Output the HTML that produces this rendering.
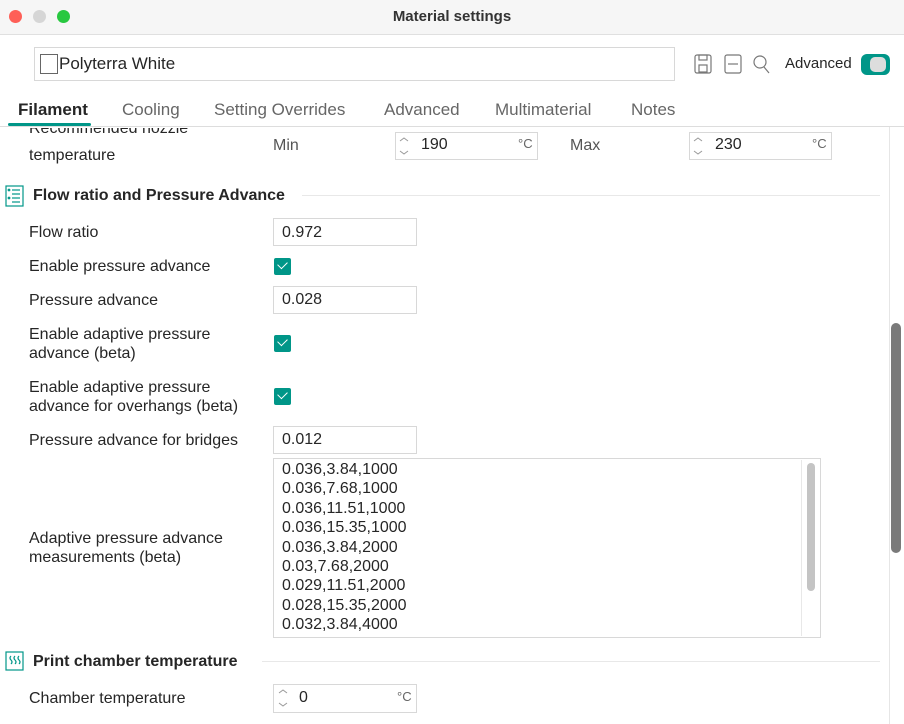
<!DOCTYPE html>
<html><head><style>
*{box-sizing:border-box;margin:0;padding:0}
body{width:904px;height:724px;background:#fff;font-family:"Liberation Sans",sans-serif;color:#262626;position:relative;overflow:hidden;font-size:16px}
.a{position:absolute;white-space:nowrap}
.box{position:absolute;border:1px solid #d8d8d8;background:#fff}
.cb{position:absolute;width:17px;height:17px;background:#009688;border-radius:2px}
.cb:after{content:"";position:absolute;left:4px;top:3px;width:8px;height:5px;border-left:1.5px solid #fff;border-bottom:1.5px solid #fff;transform:rotate(-45deg)}
.sp{position:absolute;width:16px;height:26px;border-right:1px solid #eee}
.hr{position:absolute;height:1px;background:#e8e8e8}
</style></head><body>
<div class="a" style="left:0;top:0;width:904px;height:35px;background:#f6f6f6;border-bottom:1px solid #e0e0e0"></div>
<div class="a" style="left:9px;top:10px;width:13px;height:13px;border-radius:50%;background:#fe5f57"></div>
<div class="a" style="left:33px;top:10px;width:13px;height:13px;border-radius:50%;background:#d6d6d6"></div>
<div class="a" style="left:57px;top:10px;width:13px;height:13px;border-radius:50%;background:#28c840"></div>
<div class="a" style="left:0;width:904px;text-align:center;top:8px;font-weight:bold;font-size:15px;color:#333">Material settings</div>

<div class="box" style="left:34px;top:47px;width:641px;height:34px"></div>
<div class="a" style="left:40px;top:54px;width:18px;height:20px;border:1px solid #666"></div>
<div class="a" style="left:59px;top:54px;font-size:17px">Polyterra White</div>
<svg class="a" style="left:694px;top:54px" width="80" height="22" fill="none" stroke="#777" stroke-width="1.2">
<rect x="1" y="1" width="16" height="18" rx="2"/><rect x="5" y="1" width="8" height="5"/><rect x="5" y="11" width="8" height="7"/>
<rect x="31" y="1" width="16" height="18" rx="2"/><line x1="34" y1="10" x2="44" y2="10"/>
<circle cx="66" cy="8" r="6"/><line x1="70" y1="13" x2="75" y2="19"/>
</svg>
<div class="a" style="left:785px;top:55px;font-size:15px">Advanced</div>
<div class="a" style="left:861px;top:54px;width:29px;height:21px;border-radius:6px;background:#009688"></div>
<div class="a" style="left:870px;top:57px;width:16px;height:15px;border-radius:5px;background:#ddd"></div>

<div class="a" style="left:18px;top:100px;font-size:17px;font-weight:bold">Filament</div>
<div class="a" style="left:122px;top:100px;font-size:17px;color:#666">Cooling</div>
<div class="a" style="left:214px;top:100px;font-size:17px;color:#666">Setting Overrides</div>
<div class="a" style="left:384px;top:100px;font-size:17px;color:#666">Advanced</div>
<div class="a" style="left:495px;top:100px;font-size:17px;color:#666">Multimaterial</div>
<div class="a" style="left:631px;top:100px;font-size:17px;color:#666">Notes</div>
<div class="a" style="left:8px;top:123px;width:83px;height:3px;background:#009688;border-radius:2px"></div>
<div class="hr" style="left:0;top:126px;width:904px;background:#ddd"></div>

<div class="a" style="left:29px;top:128px;height:12px;overflow:hidden;width:200px"><div style="margin-top:-8px">Recommended nozzle</div></div>
<div class="a" style="left:29px;top:147px">temperature</div>
<div class="a" style="left:273px;top:137px;color:#555">Min</div>
<div class="box" style="left:395px;top:132px;width:143px;height:28px"></div>
<svg class="a" style="left:397px;top:135px" width="14" height="22" fill="none" stroke="#999"><path d="M3 6l4-3 4 3M3 16l4 3 4-3"/></svg>
<div class="a" style="left:421px;top:136px">190</div><div class="a" style="left:518px;top:136px;font-size:13px;color:#666">°C</div>
<div class="a" style="left:570px;top:137px;color:#555">Max</div>
<div class="box" style="left:689px;top:132px;width:143px;height:28px"></div>
<svg class="a" style="left:691px;top:135px" width="14" height="22" fill="none" stroke="#999"><path d="M3 6l4-3 4 3M3 16l4 3 4-3"/></svg>
<div class="a" style="left:715px;top:136px">230</div><div class="a" style="left:812px;top:136px;font-size:13px;color:#666">°C</div>

<svg class="a" style="left:5px;top:185px" width="20" height="22" fill="none" stroke="#009688" stroke-width="1.2"><rect x="1" y="1" width="17" height="20"/><line x1="7" y1="5" x2="15" y2="5"/><line x1="7" y1="9" x2="15" y2="9"/><line x1="7" y1="13" x2="15" y2="13"/><line x1="7" y1="17" x2="15" y2="17"/><circle cx="4" cy="5" r=".8"/><circle cx="4" cy="13" r=".8"/></svg>
<div class="a" style="left:33px;top:187px;font-weight:bold">Flow ratio and Pressure Advance</div>
<div class="hr" style="left:302px;top:195px;width:578px"></div>

<div class="a" style="left:29px;top:224px">Flow ratio</div>
<div class="box" style="left:273px;top:218px;width:144px;height:28px"></div><div class="a" style="left:282px;top:224px">0.972</div>
<div class="a" style="left:29px;top:258px">Enable pressure advance</div>
<div class="cb" style="left:274px;top:258px"></div>
<div class="a" style="left:29px;top:292px">Pressure advance</div>
<div class="box" style="left:273px;top:286px;width:144px;height:28px"></div><div class="a" style="left:282px;top:291px">0.028</div>
<div class="a" style="left:29px;top:326px">Enable adaptive pressure</div>
<div class="a" style="left:29px;top:345px">advance (beta)</div>
<div class="cb" style="left:274px;top:335px"></div>
<div class="a" style="left:29px;top:379px">Enable adaptive pressure</div>
<div class="a" style="left:29px;top:398px">advance for overhangs (beta)</div>
<div class="cb" style="left:274px;top:388px"></div>
<div class="a" style="left:29px;top:432px">Pressure advance for bridges</div>
<div class="box" style="left:273px;top:426px;width:144px;height:28px"></div><div class="a" style="left:282px;top:431px">0.012</div>

<div class="box" style="left:273px;top:458px;width:548px;height:180px;overflow:hidden"></div>
<div class="a" style="left:801px;top:460px;width:1px;height:176px;background:#e8e8e8"></div>
<div class="a" style="left:807px;top:463px;width:8px;height:128px;border-radius:4px;background:#c4c4c4"></div>
<div class="a" style="left:282px;top:460px;line-height:19.4px">0.036,3.84,1000<br>0.036,7.68,1000<br>0.036,11.51,1000<br>0.036,15.35,1000<br>0.036,3.84,2000<br>0.03,7.68,2000<br>0.029,11.51,2000<br>0.028,15.35,2000<br>0.032,3.84,4000</div>
<div class="a" style="left:29px;top:530px">Adaptive pressure advance</div>
<div class="a" style="left:29px;top:549px">measurements (beta)</div>

<svg class="a" style="left:5px;top:651px" width="20" height="20" fill="none" stroke="#009688" stroke-width="1.2"><rect x="1" y="1" width="17" height="18"/><path d="M6 5q-2 2 0 4q2 2 0 4M10 5q-2 2 0 4q2 2 0 4M14 5q-2 2 0 4q2 2 0 4"/></svg>
<div class="a" style="left:33px;top:653px;font-weight:bold">Print chamber temperature</div>
<div class="hr" style="left:262px;top:661px;width:618px"></div>
<div class="a" style="left:29px;top:690px">Chamber temperature</div>
<div class="box" style="left:273px;top:684px;width:144px;height:29px"></div>
<svg class="a" style="left:276px;top:687px" width="14" height="22" fill="none" stroke="#999"><path d="M3 6l4-3 4 3M3 16l4 3 4-3"/></svg>
<div class="a" style="left:299px;top:689px">0</div><div class="a" style="left:397px;top:689px;font-size:13px;color:#666">°C</div>

<div class="a" style="left:889px;top:127px;width:1px;height:597px;background:#e6e6e6"></div>
<div class="a" style="left:891px;top:323px;width:10px;height:230px;border-radius:5px;background:#7a7a7a"></div>
</body></html>
